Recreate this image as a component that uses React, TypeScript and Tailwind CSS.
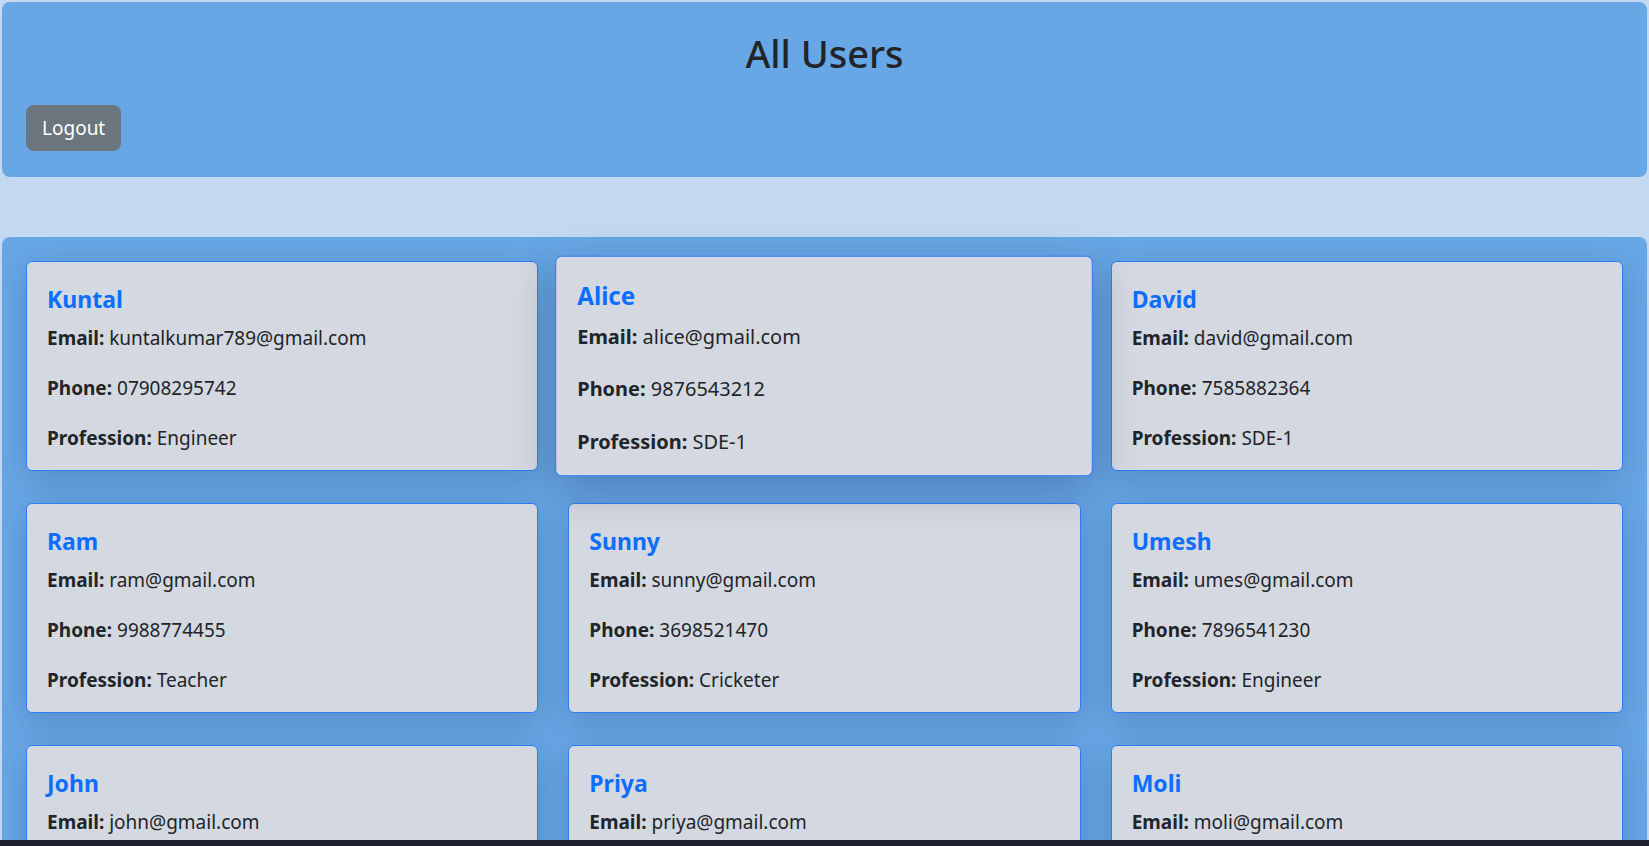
import React from "react"

type User = {
  name: string
  email: string
  phone: string
  profession: string
}

const users: User[] = [
  { name: "Kuntal", email: "kuntalkumar789@gmail.com", phone: "07908295742", profession: "Engineer" },
  { name: "Alice", email: "alice@gmail.com", phone: "9876543212", profession: "SDE-1" },
  { name: "David", email: "david@gmail.com", phone: "7585882364", profession: "SDE-1" },
  { name: "Ram", email: "ram@gmail.com", phone: "9988774455", profession: "Teacher" },
  { name: "Sunny", email: "sunny@gmail.com", phone: "3698521470", profession: "Cricketer" },
  { name: "Umesh", email: "umes@gmail.com", phone: "7896541230", profession: "Engineer" },
  { name: "John", email: "john@gmail.com", phone: "9871234560", profession: "Doctor" },
  { name: "Priya", email: "priya@gmail.com", phone: "9123456780", profession: "Designer" },
  { name: "Moli", email: "moli@gmail.com", phone: "9012345678", profession: "Engineer" },
]

const UserCard = ({ user, hovered }: { user: User; hovered?: boolean }) => {
  return (
    <div
      className={
        hovered
          ? "scale-105 rounded-md border border-[#2f7cf6] bg-[#d4d8e0] px-5 pt-[23px] pb-[17px] shadow-[0_12px_40px_rgba(20,40,80,0.3)]"
          : "rounded-md border border-[#2f7cf6] bg-[#d4d8e0] px-5 pt-[23px] pb-[17px] shadow-[0_8px_34px_rgba(20,40,80,0.22)]"
      }
    >
      <h4 className="mb-[10px] text-[23px] leading-[28px] font-bold text-[#0d6efd]">{user.name}</h4>
      <div className="flex flex-col gap-5 text-[19px] leading-[30px] text-[#212529]">
        <p>
          <span className="font-bold">Email:</span> {user.email}
        </p>
        <p>
          <span className="font-bold">Phone:</span> {user.phone}
        </p>
        <p>
          <span className="font-bold">Profession:</span> {user.profession}
        </p>
      </div>
    </div>
  )
}

const App = () => {
  return (
    <div className="min-h-screen bg-[#c3d9f1] pt-0.5 pb-10 font-['Noto_Sans',sans-serif] text-[#212529]">
      <header className="mx-0.5 rounded-lg bg-[#68a7e6] px-6 pt-[27px] pb-[26px]">
        <h1 className="text-center text-[38px] leading-[48px] font-medium">All Users</h1>
        <button className="mt-[28px] rounded-lg bg-[#6c757d] px-4 py-2 text-[19px] leading-[30px] text-white">
          Logout
        </button>
      </header>

      <main className="mx-0.5 mt-[60px] rounded-lg bg-[#68a7e6] px-6 pt-6 pb-8">
        <div className="grid grid-cols-3 gap-x-[30px] gap-y-[32px]">
          {users.map((u) => (
            <UserCard key={u.name} user={u} hovered={u.name === "Alice"} />
          ))}
        </div>
      </main>

      <div className="fixed inset-x-0 bottom-0 h-[6px] bg-[#1e2230]" />
    </div>
  )
}

export default App
